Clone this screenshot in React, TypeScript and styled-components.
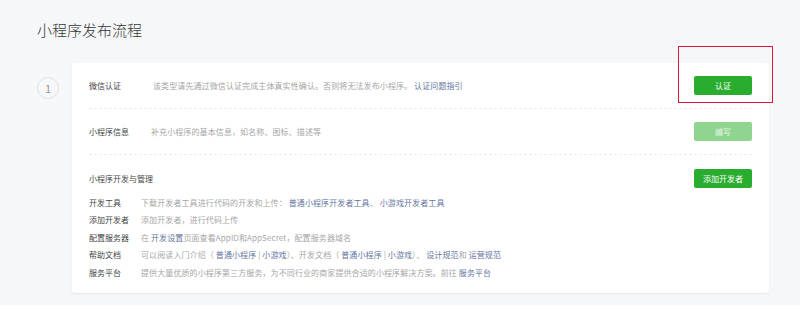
import styled, { createGlobalStyle } from "styled-components";

const GlobalStyle = createGlobalStyle`
  html, body {
    margin: 0;
    padding: 0;
    background: #ffffff;
    font-family: "Noto Sans CJK SC", "Noto Sans", sans-serif;
  }
`;

const Page = styled.div`
  width: 800px;
  height: 305px;
  box-sizing: border-box;
  background: #f6f7f9;
  padding: 20px 33px 0 37px;
`;

const Title = styled.h2`
  margin: 0;
  font-size: 15px;
  line-height: 20px;
  font-weight: 300;
  color: #353535;
`;

const Step = styled.div`
  display: flex;
  align-items: flex-start;
  gap: 13px;
  margin-top: 23px;
`;

const StepNum = styled.div`
  flex: none;
  width: 20px;
  height: 20px;
  margin-top: 14px;
  border: 1px solid #e2e3e6;
  border-radius: 50%;
  display: flex;
  justify-content: center;
  align-items: center;
  font-size: 11px;
  color: #9a9a9a;
`;

const Card = styled.div`
  flex: none;
  width: 697px;
  box-sizing: border-box;
  background: #ffffff;
  border-radius: 3px;
  box-shadow: 0 1px 2px rgba(0, 0, 0, 0.07);
  padding: 0 17px 11px;
`;

const Row = styled.div`
  height: 46px;
  display: flex;
  align-items: center;
  border-bottom: 1px dashed #eeeef0;
  box-sizing: border-box;
`;

const Label = styled.div<{ $w: number }>`
  flex: none;
  width: ${(p) => p.$w}px;
  font-size: 8px;
  line-height: 12px;
  color: #454545;
`;

const Desc = styled.div`
  flex: 1;
  font-size: 8px;
  line-height: 12px;
  letter-spacing: 0.1px;
  color: #a6a6a6;
  white-space: nowrap;
`;

const Link = styled.a`
  color: #6675a0;
  text-decoration: none;
`;

const ActionCell = styled.div`
  position: relative;
  flex: none;
`;

const Button = styled.button<{ $disabled?: boolean }>`
  width: 58px;
  height: 19px;
  padding: 0;
  border: none;
  border-radius: 2px;
  background: ${(p) => (p.$disabled ? "#8fd48f" : "#2aad2f")};
  color: ${(p) => (p.$disabled ? "#e6f5e6" : "#ffffff")};
  font-family: inherit;
  font-size: 8px;
  display: flex;
  justify-content: center;
  align-items: center;
`;

const Highlight = styled.div`
  position: absolute;
  left: -16px;
  right: -21px;
  top: -30px;
  bottom: -8px;
  border: 1px solid #e0163c;
  pointer-events: none;
`;

const Section = styled.div`
  padding-top: 14px;
`;

const SectionHead = styled.div`
  display: flex;
  justify-content: space-between;
  align-items: center;
  height: 19px;
`;

const List = styled.div`
  margin-top: 6px;
  display: flex;
  flex-direction: column;
`;

const ListRow = styled.div`
  display: flex;
  align-items: center;
  height: 17.5px;
`;

const tools = [
  {
    label: "开发工具",
    desc: (
      <>
        下载开发者工具进行代码的开发和上传：{" "}
        <Link>普通小程序开发者工具</Link>、 <Link>小游戏开发者工具</Link>
      </>
    ),
  },
  { label: "添加开发者", desc: <>添加开发者，进行代码上传</> },
  {
    label: "配置服务器",
    desc: (
      <>
        在 <Link>开发设置</Link>页面查看AppID和AppSecret，配置服务器域名
      </>
    ),
  },
  {
    label: "帮助文档",
    desc: (
      <>
        可以阅读入门介绍（ <Link>普通小程序</Link> | <Link>小游戏</Link>
        ）、开发文档（ <Link>普通小程序</Link> | <Link>小游戏</Link>）、{" "}
        <Link>设计规范</Link>和 <Link>运营规范</Link>
      </>
    ),
  },
  {
    label: "服务平台",
    desc: (
      <>
        提供大量优质的小程序第三方服务，为不同行业的商家提供合适的小程序解决方案。前往{" "}
        <Link>服务平台</Link>
      </>
    ),
  },
];

function App() {
  return (
    <>
      <GlobalStyle />
      <Page>
        <Title>小程序发布流程</Title>
        <Step>
          <StepNum>1</StepNum>
          <Card>
            <Row>
              <Label $w={64}>微信认证</Label>
              <Desc>
                该类型请先通过微信认证完成主体真实性确认。否则将无法发布小程序。{" "}
                <Link>认证问题指引</Link>
              </Desc>
              <ActionCell>
                <Button>认证</Button>
                <Highlight />
              </ActionCell>
            </Row>
            <Row>
              <Label $w={62}>小程序信息</Label>
              <Desc>补充小程序的基本信息，如名称、图标、描述等</Desc>
              <ActionCell>
                <Button $disabled>编写</Button>
              </ActionCell>
            </Row>
            <Section>
              <SectionHead>
                <Label $w={120}>小程序开发与管理</Label>
                <Button>添加开发者</Button>
              </SectionHead>
              <List>
                {tools.map((t) => (
                  <ListRow key={t.label}>
                    <Label $w={52}>{t.label}</Label>
                    <Desc>{t.desc}</Desc>
                  </ListRow>
                ))}
              </List>
            </Section>
          </Card>
        </Step>
      </Page>
    </>
  );
}

export default App;
